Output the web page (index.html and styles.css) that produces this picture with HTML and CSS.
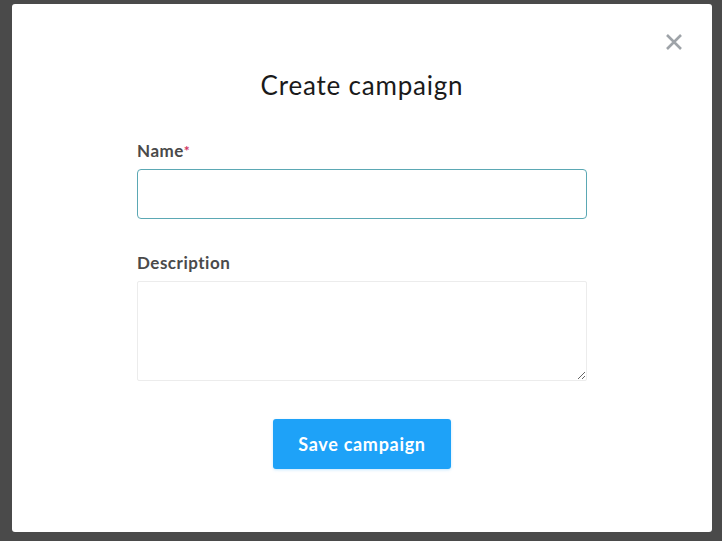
FILE: index.html
```html
<!DOCTYPE html>
<html lang="en">
<head>
  <meta charset="UTF-8">
  <title>Create campaign</title>
  <link rel="stylesheet" href="styles.css">
</head>
<body>
<div class="backdrop">
  <div class="modal">
    <button class="modal-close" type="button" aria-label="Close">
      <svg width="18" height="18" viewBox="0 0 18 18">
        <path d="M2 2 L16 16 M16 2 L2 16" />
      </svg>
    </button>
    <h2 class="modal-title">Create campaign</h2>
    <form class="campaign-form">
      <label class="field">
        <span class="field-label">Name<span class="required">*</span></span>
        <input class="field-input field-input-focus" type="text">
      </label>
      <label class="field">
        <span class="field-label">Description</span>
        <textarea class="field-textarea"></textarea>
      </label>
      <div class="form-actions">
        <button class="btn-primary" type="button">Save campaign</button>
      </div>
    </form>
  </div>
</div>
</body>
</html>
```

FILE: styles.css
```css
html, body {
  margin: 0;
  height: 100%;
}
body {
  background: #4a4a4a;
  font-family: Lato, "Noto Sans", sans-serif;
}
.backdrop {
  padding: 4px 10px 9px 12px;
  height: 100%;
  box-sizing: border-box;
}
.modal {
  position: relative;
  background: #ffffff;
  border-radius: 3px;
  width: 700px;
  height: 528px;
  box-sizing: border-box;
  padding-top: 66px;
}
.modal-close {
  position: absolute;
  top: 29px;
  right: 29px;
  background: none;
  border: 0;
  padding: 0;
  width: 18px;
  height: 18px;
  cursor: pointer;
}
.modal-close svg {
  display: block;
}
.modal-close path {
  stroke: #9ea3a8;
  stroke-width: 2.6;
  stroke-linecap: butt;
}
.modal-title {
  margin: 0;
  text-align: center;
  font-weight: 400;
  font-size: 26px;
  line-height: 30px;
  letter-spacing: 0.8px;
  color: #1a1a1a;
}
.campaign-form {
  width: 450px;
  margin: 0 auto;
  padding-top: 41px;
}
.field {
  display: flex;
  flex-direction: column;
  gap: 8px;
  margin-bottom: 34px;
}
.field-label {
  font-weight: 700;
  font-size: 17px;
  line-height: 20px;
  letter-spacing: 0.5px;
  color: #4a4a4a;
}
.required {
  color: #d0335e;
  font-size: 14px;
  vertical-align: top;
}
.field-input,
.field-textarea {
  box-sizing: border-box;
  width: 450px;
  font: inherit;
  margin: 0;
  outline: none;
}
.field-input {
  height: 50px;
  border: 1px solid #e6e6e6;
  border-radius: 4px;
}
.field-input-focus {
  border-color: #5ba8b4;
}
.field-textarea {
  height: 100px;
  border: 1px solid #ececec;
  border-radius: 2px;
  resize: vertical;
}
.form-actions {
  display: flex;
  justify-content: center;
  padding-top: 4px;
}
.btn-primary {
  background: #1ea2f8;
  color: #ffffff;
  border: 0;
  border-radius: 3px;
  width: 178px;
  height: 50px;
  font-family: inherit;
  font-weight: 700;
  font-size: 18px;
  letter-spacing: 0.7px;
  box-shadow: 0 1px 3px rgba(30, 162, 248, 0.25);
  cursor: pointer;
}
```
